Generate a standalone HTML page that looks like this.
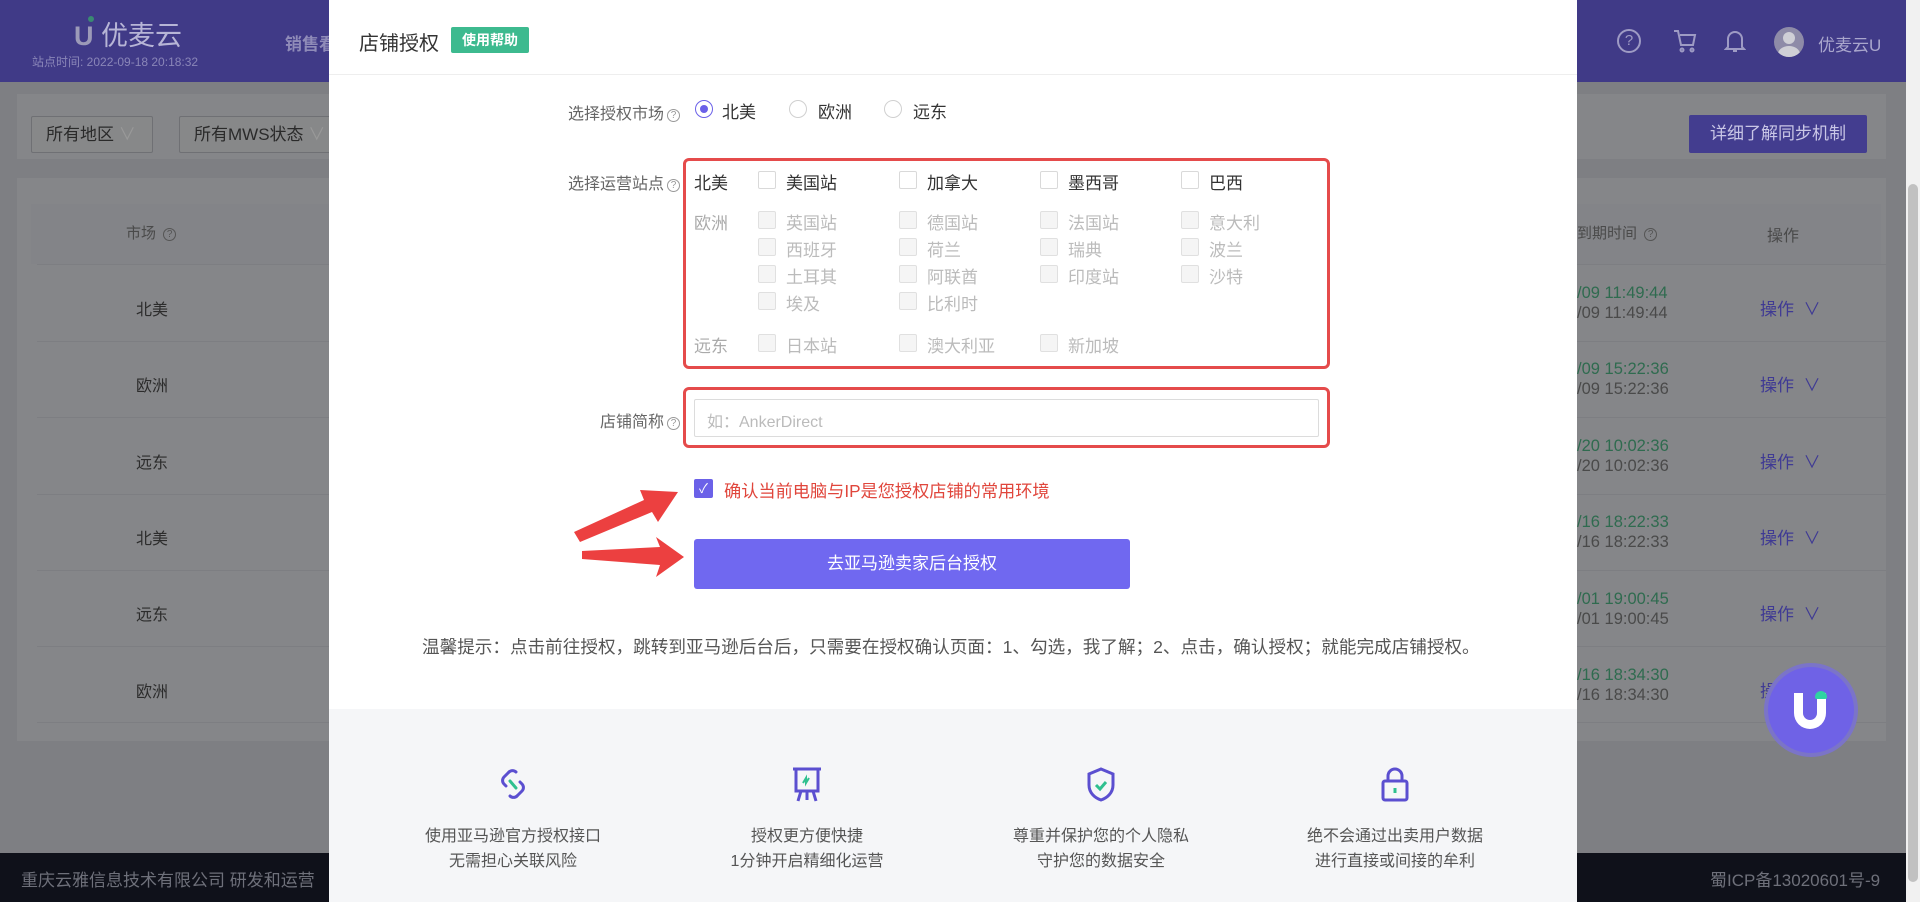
<!DOCTYPE html>
<html><head><meta charset="utf-8"><style>
*{margin:0;padding:0;box-sizing:border-box}
body{width:1920px;height:902px;overflow:hidden;position:relative;background:#7e7f83;font-family:"Liberation Sans","Noto Sans CJK SC",sans-serif;color:#333}
.a{position:absolute;white-space:nowrap}
.hdr{left:0;top:0;width:1906px;height:82px;background:#403a87}
.card{background:#858689}
.sel{border:1px solid #6f7074;background:#878889;height:37px;top:116px;font-size:17px;color:#2a2a2a;line-height:35px;padding-left:14px;border-radius:2px}
.cell{font-size:16px;color:#2c2c2c}
.date1{font-size:16.5px;color:#2f6b4f;left:1577px}
.date2{font-size:16.5px;color:#4a4a4a;left:1577px}
.op{font-size:17px;color:#3f3a94;left:1760px}
.rowline{left:37px;width:1849px;height:1px;background:#7d7e82}
.modal{left:329px;top:0;width:1248px;height:902px;background:#fff}
.lbl{font-size:16px;color:#666;text-align:right}
.q{display:inline-block;width:13px;height:13px;border:1px solid #999;border-radius:50%;font-size:10px;line-height:11px;text-align:center;color:#999;vertical-align:1px;margin-left:3px}
.cb{width:18px;height:18px;border:1px solid #d9d9d9;border-radius:2px;background:#fff}
.cbd{background:#f5f5f5;border-color:#e0e0e0}
.t{font-size:17px;color:#333}
.td{font-size:17px;color:#bbb}
.rad{width:18px;height:18px;border:1px solid #d0d0d0;border-radius:50%}
.red{border:3px solid #e54b4b;border-radius:6px}
.ft{font-size:16px;color:#555;text-align:center;line-height:25px;width:240px}
</style></head><body>
<div class="a hdr"></div>
<div class="a" style="left:74px;top:14px;font-size:27px;color:#b7b5d6"><span style="font-weight:bold;color:#9c9ab8">U</span><span style="position:absolute;left:14px;top:2px;width:6px;height:6px;border-radius:50%;background:#3a8a72"></span> 优麦云</div>
<div class="a" style="left:32px;top:53px;font-size:12px;color:#8a86b8">站点时间: 2022-09-18 20:18:32</div>
<div class="a" style="left:285px;top:30px;font-size:17px;font-weight:bold;color:#8f8bb8">销售看</div>
<div class="a" style="left:1617px;top:29px;width:24px;height:24px;border:2px solid #9e9bc4;border-radius:50%;color:#9e9bc4;font-size:15px;text-align:center;line-height:20px">?</div>
<svg class="a" style="left:1672px;top:28px" width="26" height="26" viewBox="0 0 26 26" fill="none" stroke="#9e9bc4" stroke-width="2"><path d="M2 3h4l3 14h12l2-10H8"/><circle cx="10" cy="22" r="1.5"/><circle cx="20" cy="22" r="1.5"/></svg>
<svg class="a" style="left:1724px;top:28px" width="22" height="26" viewBox="0 0 22 26" fill="none" stroke="#9e9bc4" stroke-width="2"><path d="M4 19V11a7 7 0 0 1 14 0v8l2 2H2z M9 23h4"/></svg>
<div class="a" style="left:1774px;top:27px;width:30px;height:30px;border-radius:50%;background:#8e8ba8;overflow:hidden"><div style="position:absolute;left:9px;top:5px;width:12px;height:12px;border-radius:50%;background:#cfcfd6"></div><div style="position:absolute;left:4px;top:19px;width:22px;height:16px;border-radius:50%;background:#cfcfd6"></div></div>
<div class="a" style="left:1818px;top:31px;font-size:17px;color:#a9a6cc">优麦云U</div>

<div class="a card" style="left:17px;top:94px;width:1869px;height:65px"></div>
<div class="a sel" style="left:31px;width:122px">所有地区 <span style="color:#999">∨</span></div>
<div class="a sel" style="left:179px;width:160px">所有MWS状态 <span style="color:#999">∨</span></div>
<div class="a" style="left:1689px;top:115px;width:178px;height:38px;background:#433d8f;border-radius:2px;color:#c9c6e6;font-size:17px;text-align:center;line-height:38px">详细了解同步机制</div>

<div class="a card" style="left:17px;top:178px;width:1869px;height:563px"></div>
<div class="a" style="left:31px;top:204px;width:1850px;height:60px;background:#838488"></div>
<div class="a cell" style="left:126px;top:222px;color:#4a4a4a;font-size:15px">市场 <span class="q" style="border-color:#555;color:#555">?</span></div>
<div class="a cell" style="left:1577px;top:222px;color:#4a4a4a;font-size:15px">到期时间 <span class="q" style="border-color:#555;color:#555">?</span></div>
<div class="a cell" style="left:1767px;top:222px;color:#4a4a4a;font-size:16px">操作</div>
<div class="a cell" style="left:136px;top:296px">北美</div>
<div class="a cell" style="left:136px;top:372px">欧洲</div>
<div class="a cell" style="left:136px;top:449px">远东</div>
<div class="a cell" style="left:136px;top:525px">北美</div>
<div class="a cell" style="left:136px;top:601px">远东</div>
<div class="a cell" style="left:136px;top:678px">欧洲</div>
<div class="a rowline" style="top:264px"></div><div class="a rowline" style="top:341px"></div><div class="a rowline" style="top:417px"></div><div class="a rowline" style="top:494px"></div><div class="a rowline" style="top:570px"></div><div class="a rowline" style="top:646px"></div><div class="a rowline" style="top:722px"></div>
<div class="a date1" style="top:284px">/09 11:49:44</div><div class="a date2" style="top:304px">/09 11:49:44</div>
<div class="a date1" style="top:360px">/09 15:22:36</div><div class="a date2" style="top:380px">/09 15:22:36</div>
<div class="a date1" style="top:437px">/20 10:02:36</div><div class="a date2" style="top:457px">/20 10:02:36</div>
<div class="a date1" style="top:513px">/16 18:22:33</div><div class="a date2" style="top:533px">/16 18:22:33</div>
<div class="a date1" style="top:590px">/01 19:00:45</div><div class="a date2" style="top:610px">/01 19:00:45</div>
<div class="a date1" style="top:666px">/16 18:34:30</div><div class="a date2" style="top:686px">/16 18:34:30</div>
<div class="a op" style="top:295px">操作 &nbsp;∨</div>
<div class="a op" style="top:371px">操作 &nbsp;∨</div>
<div class="a op" style="top:448px">操作 &nbsp;∨</div>
<div class="a op" style="top:524px">操作 &nbsp;∨</div>
<div class="a op" style="top:600px">操作 &nbsp;∨</div>
<div class="a op" style="top:677px">操作</div>
<div class="a" style="left:1768px;top:667px;width:86px;height:86px;border-radius:50%;background:#6f62e6;box-shadow:0 0 0 4px #7b74c8"></div>
<div class="a" style="left:1794px;top:693px;width:32px;height:36px;border:9px solid #fff;border-top:none;border-radius:0 0 16px 16px"></div>
<div class="a" style="left:1815px;top:691px;width:12px;height:8px;border-radius:6px 6px 2px 2px;background:#2fd3a2"></div>

<div class="a" style="left:0;top:853px;width:1906px;height:49px;background:#0f111a"></div>
<div class="a" style="left:21px;top:866px;font-size:17px;color:#6e707a">重庆云雅信息技术有限公司 研发和运营</div>
<div class="a" style="left:1710px;top:866px;font-size:17px;color:#6e707a">蜀ICP备13020601号-9</div>
<div class="a" style="left:1906px;top:0;width:14px;height:902px;background:#f1f1f1"></div>
<div class="a" style="left:1908px;top:184px;width:10px;height:698px;background:#c1c1c1;border-radius:5px"></div>

<div class="a modal"></div>
<div class="a" style="left:359px;top:27px;font-size:20px;color:#333">店铺授权</div>
<div class="a" style="left:451px;top:27px;width:78px;height:26px;background:#3dba8f;border-radius:2px;color:#fff;font-size:14px;text-align:center;line-height:26px;font-weight:bold">使用帮助</div>
<div class="a" style="left:329px;top:74px;width:1248px;height:1px;background:#eee"></div>

<div class="a lbl" style="left:480px;top:100px;width:200px">选择授权市场<span class="q">?</span></div>
<div class="a rad" style="left:695px;top:100px;border-color:#6b61e8"><div style="position:absolute;left:4px;top:4px;width:8px;height:8px;border-radius:50%;background:#6b61e8"></div></div>
<div class="a t" style="left:722px;top:98px">北美</div>
<div class="a rad" style="left:789px;top:100px"></div><div class="a t" style="left:818px;top:98px">欧洲</div>
<div class="a rad" style="left:884px;top:100px"></div><div class="a t" style="left:913px;top:98px">远东</div>

<div class="a lbl" style="left:480px;top:170px;width:200px">选择运营站点<span class="q">?</span></div>
<div class="a red" style="left:683px;top:158px;width:647px;height:211px"></div>
<div class="a t" style="left:694px;top:169px">北美</div>
<div class="a cb" style="left:758px;top:171px"></div><div class="a t" style="left:786px;top:169px">美国站</div>
<div class="a cb" style="left:899px;top:171px"></div><div class="a t" style="left:927px;top:169px">加拿大</div>
<div class="a cb" style="left:1040px;top:171px"></div><div class="a t" style="left:1068px;top:169px">墨西哥</div>
<div class="a cb" style="left:1181px;top:171px"></div><div class="a t" style="left:1209px;top:169px">巴西</div>
<div class="a td" style="left:694px;top:209px;color:#aaa">欧洲</div>
<div class="a cb cbd" style="left:758px;top:211px"></div><div class="a td" style="left:786px;top:209px">英国站</div>
<div class="a cb cbd" style="left:899px;top:211px"></div><div class="a td" style="left:927px;top:209px">德国站</div>
<div class="a cb cbd" style="left:1040px;top:211px"></div><div class="a td" style="left:1068px;top:209px">法国站</div>
<div class="a cb cbd" style="left:1181px;top:211px"></div><div class="a td" style="left:1209px;top:209px">意大利</div>
<div class="a cb cbd" style="left:758px;top:238px"></div><div class="a td" style="left:786px;top:236px">西班牙</div>
<div class="a cb cbd" style="left:899px;top:238px"></div><div class="a td" style="left:927px;top:236px">荷兰</div>
<div class="a cb cbd" style="left:1040px;top:238px"></div><div class="a td" style="left:1068px;top:236px">瑞典</div>
<div class="a cb cbd" style="left:1181px;top:238px"></div><div class="a td" style="left:1209px;top:236px">波兰</div>
<div class="a cb cbd" style="left:758px;top:265px"></div><div class="a td" style="left:786px;top:263px">土耳其</div>
<div class="a cb cbd" style="left:899px;top:265px"></div><div class="a td" style="left:927px;top:263px">阿联酋</div>
<div class="a cb cbd" style="left:1040px;top:265px"></div><div class="a td" style="left:1068px;top:263px">印度站</div>
<div class="a cb cbd" style="left:1181px;top:265px"></div><div class="a td" style="left:1209px;top:263px">沙特</div>
<div class="a cb cbd" style="left:758px;top:292px"></div><div class="a td" style="left:786px;top:290px">埃及</div>
<div class="a cb cbd" style="left:899px;top:292px"></div><div class="a td" style="left:927px;top:290px">比利时</div>
<div class="a td" style="left:694px;top:332px;color:#aaa">远东</div>
<div class="a cb cbd" style="left:758px;top:334px"></div><div class="a td" style="left:786px;top:332px">日本站</div>
<div class="a cb cbd" style="left:899px;top:334px"></div><div class="a td" style="left:927px;top:332px">澳大利亚</div>
<div class="a cb cbd" style="left:1040px;top:334px"></div><div class="a td" style="left:1068px;top:332px">新加坡</div>

<div class="a lbl" style="left:480px;top:408px;width:200px">店铺简称<span class="q">?</span></div>
<div class="a red" style="left:683px;top:387px;width:647px;height:61px"></div>
<div class="a" style="left:694px;top:399px;width:625px;height:38px;border:1px solid #dcdcdc;border-radius:2px"></div>
<div class="a" style="left:707px;top:408px;font-size:16px;color:#bbb">如：AnkerDirect</div>

<div class="a" style="left:694px;top:479px;width:19px;height:19px;background:#6b61e8;border-radius:2px;color:#fff;font-size:13px;text-align:center;line-height:19px">✓</div>
<div class="a" style="left:724px;top:477px;font-size:17.2px;color:#e0463c">确认当前电脑与IP是您授权店铺的常用环境</div>
<svg class="a" style="left:560px;top:470px" width="140" height="110" viewBox="0 0 140 110"><polygon points="14,62 84,30 80,20 118,22 98,52 92,42 20,72" fill="#ec4040"/><polygon points="22,86 100,82 96,72 124,92 96,112 100,100 22,94" fill="#ec4040" transform="translate(0,-5)"/></svg>
<div class="a" style="left:694px;top:539px;width:436px;height:50px;background:#7068f0;border-radius:3px;color:#fff;font-size:17px;text-align:center;line-height:50px">去亚马逊卖家后台授权</div>
<div class="a" style="left:422px;top:634px;font-size:17.6px;color:#555">温馨提示：点击前往授权，跳转到亚马逊后台后，只需要在授权确认页面：1、勾选，我了解；2、点击，确认授权；就能完成店铺授权。</div>

<div class="a" style="left:329px;top:709px;width:1248px;height:193px;background:#f5f6f8"></div>
<svg class="a" style="left:495px;top:766px" width="36" height="36" viewBox="0 0 36 36" fill="none" stroke-width="3" stroke-linecap="round"><path d="M14 6l-5 5a5 5 0 0 0 0 7l2 2M22 30l5-5a5 5 0 0 0 0-7l-2-2" stroke="#5b4fd0"/><path d="M14 6a5 5 0 0 1 7 0M22 30a5 5 0 0 1-7 0" stroke="#5b4fd0"/><path d="M15 15l6 7" stroke="#2fc08f"/></svg>
<svg class="a" style="left:789px;top:766px" width="36" height="38" viewBox="0 0 36 38" fill="none" stroke="#5b4fd0" stroke-width="3"><path d="M4 3h28M7 3v22h22V3M12 25l-3 10M24 25l3 10M18 25v9"/><path d="M14 17l3-5v5l3-5" stroke="#2fc08f" stroke-width="2"/></svg>
<svg class="a" style="left:1083px;top:766px" width="36" height="38" viewBox="0 0 36 38" fill="none" stroke-width="3"><path d="M18 3l12 5v11c0 8-6 13-12 15C12 32 6 27 6 19V8z" stroke="#5b4fd0"/><path d="M13 19l4 4 6-7" stroke="#2fc08f"/></svg>
<svg class="a" style="left:1377px;top:764px" width="36" height="40" viewBox="0 0 36 40" fill="none" stroke="#5b4fd0" stroke-width="3"><path d="M11 17v-5a7 7 0 0 1 14 0v5"/><rect x="6" y="17" width="24" height="19" rx="2"/><path d="M18 24v5" stroke="#2fc08f"/></svg>
<div class="a ft" style="left:393px;top:824px">使用亚马逊官方授权接口<br>无需担心关联风险</div>
<div class="a ft" style="left:687px;top:824px">授权更方便快捷<br>1分钟开启精细化运营</div>
<div class="a ft" style="left:981px;top:824px">尊重并保护您的个人隐私<br>守护您的数据安全</div>
<div class="a ft" style="left:1275px;top:824px">绝不会通过出卖用户数据<br>进行直接或间接的牟利</div>
</body></html>
